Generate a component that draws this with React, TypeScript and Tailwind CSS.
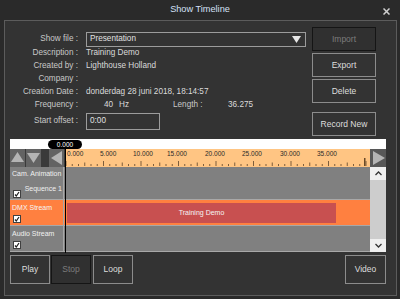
import React from 'react';

const ticks = Array.from({ length: 49 }, (_, i) => i);
// label left edges as seen on the ruler (px from ruler start)
const labels: [number, number][] = [
  [0, 2],
  [5, 35],
  [10, 68],
  [15, 102],
  [20, 140],
  [25, 177],
  [30, 215],
  [35, 252],
];

const Btn = ({ label, disabled, className = '' }: { label: string; disabled?: boolean; className?: string }) => (
  <div
    className={`flex items-center justify-center border text-[8.5px] ${
      disabled ? 'border-[#151515] text-[#7c7c7c] bg-[#303030]' : 'border-[#8c8c8c] text-[#dedede] bg-[#333333]'
    } ${className}`}
  >
    {label}
  </div>
);

const Check = () => (
  <div className="w-[8px] h-[8px] bg-white border border-[#404040] flex items-center justify-center">
    <svg width="6" height="6" viewBox="0 0 6 6">
      <path d="M1 3.5 L2.3 5 L5 1" stroke="#202020" strokeWidth="1.2" fill="none" />
    </svg>
  </div>
);

const Tri = ({ dir }: { dir: 'up' | 'down' | 'left' | 'right' }) => {
  const pts = {
    up: '1,12 7.5,2 14,12',
    down: '1,3 7.5,13 14,3',
    left: '13,1 2,8 13,15',
    right: '2,1 14,8 2,15',
  }[dir];
  return (
    <svg width="15" height="16" viewBox="0 0 15 16">
      <polygon points={pts} fill="#b4b4b4" />
    </svg>
  );
};

const Row = ({ label, children }: { label: string; children?: React.ReactNode }) => (
  <div className="flex items-center h-[13px] leading-[13px]">
    <div className="w-[68px] text-right text-[#c8c8c8] whitespace-nowrap">{label}</div>
    <div className="ml-[8px] flex items-center text-[#dadada] whitespace-nowrap">{children}</div>
  </div>
);

export default function App() {
  return (
    <div className="w-[400px] h-[299px] bg-[#2a2a2a] flex flex-col overflow-hidden font-['Liberation_Sans',Arial,sans-serif] text-[8.2px]">
      <div className="h-[20px] flex items-center justify-center relative text-[9.2px] text-[#d4e1f6]">
        Show Timeline
        <svg className="absolute right-[10px] top-[8px]" width="7" height="7" viewBox="0 0 7 7">
          <path d="M0.5 0.5 L6.5 6.5 M6.5 0.5 L0.5 6.5" stroke="#d0d0d0" strokeWidth="1.5" />
        </svg>
      </div>
      <div className="ml-[4px] w-[393px] h-[276px] border border-[#5c5c5c] bg-[#333333] pl-[5px]">
        <div className="flex items-start">
          <div className="w-[296px] pt-[11px]">
            <div className="flex items-center h-[15px]">
              <div className="w-[68px] text-right text-[#c8c8c8]">Show file :</div>
              <div className="ml-[8px] w-[220px] h-[15px] border border-[#9c9c9c] flex items-center pl-[3px] pr-[4px] text-[#e0e0e0]">
                <span className="flex-1">Presentation</span>
                <svg width="9" height="7" viewBox="0 0 9 7">
                  <polygon points="0,0 9,0 4.5,7" fill="#e6e6e6" />
                </svg>
              </div>
            </div>
            <div className="mt-[-1px]">
              <Row label="Description :">Training Demo</Row>
              <Row label="Created by :">Lighthouse Holland</Row>
              <Row label="Company :" />
              <Row label="Creation Date :">donderdag 28 juni 2018, 18:14:57</Row>
              <Row label="Frequency :">
                <span className="w-[27px] text-right">40</span>
                <span className="ml-[6px] w-[54px]">Hz</span>
                <span className="w-[55px] text-[#c8c8c8]">Length :</span>
                <span>36.275</span>
              </Row>
            </div>
            <div className="flex items-center mt-[2px]">
              <div className="w-[68px] text-right text-[#c8c8c8]">Start offset :</div>
              <div className="ml-[8px] w-[74px] h-[17px] border border-[#9c9c9c] flex items-center pl-[3px] text-[#e0e0e0]">
                0:00
              </div>
            </div>
          </div>
          <div className="ml-[6px] pt-[6px] flex flex-col w-[64px]">
            <Btn label="Import" disabled className="h-[24px]" />
            <Btn label="Export" className="h-[24px] mt-[2px]" />
            <Btn label="Delete" className="h-[24px] mt-[2px]" />
            <Btn label="Record New" className="h-[24px] mt-[9px]" />
          </div>
        </div>

        <div className="mt-[3px] w-[376px] relative">
          <div className="h-[10px] bg-white relative">
            <div className="absolute left-[38px] top-[1px] w-[34px] h-[9px] rounded-full bg-black text-white text-[6.5px] leading-[9px] text-center">
              0.000
            </div>
          </div>
          <div className="h-[18px] flex">
            <div className="w-[55px] flex bg-[#3a3a3a]">
              <div className="w-[15px] bg-[#636363] flex items-center justify-center"><Tri dir="up" /></div>
              <div className="w-[15px] ml-[1px] bg-[#636363] flex items-center justify-center"><Tri dir="down" /></div>
              <div className="w-[15px] ml-[8px] bg-[#636363] flex items-center justify-center"><Tri dir="left" /></div>
            </div>
            <svg width="305" height="18" viewBox="0 0 305 18" className="bg-[#ffc583]">
              {ticks.map((i) => {
                const x = i * 6.25 + 0.5;
                const h = i % 6 === 0 ? 5 : i % 3 === 0 ? 3.5 : 2;
                return <rect key={i} x={x} y={17 - h} width="1" height={h} fill="#7e5e3c" />;
              })}
              <rect x="299" y="9" width="1.5" height="8" fill="#6a4a28" />
              {labels.map(([v, x]) => (
                <text
                  key={v}
                  x={x}
                  y="7"
                  fontSize="6.5"
                  fill="#2a2a2a"
                  fontFamily="Liberation Sans, Arial, sans-serif"
                >
                  {v.toFixed(3)}
                </text>
              ))}
            </svg>
            <div className="w-[16px] bg-[#575757] flex items-center justify-center"><Tri dir="right" /></div>
          </div>
          <div className="flex">
            <div className="w-[360px] flex flex-col">
              <div className="h-[33px] flex border-b border-[#a8a8a8]">
                <div className="w-[54px] bg-[#808080] border-r border-[#a8a8a8] flex flex-col pl-[2px] pt-[2px] text-[7px] text-[#f0f0f0]">
                  <div className="leading-[9px] whitespace-nowrap">Cam. Animation</div>
                  <div className="flex items-start mt-[6px] pl-[1px] h-[14px]">
                    <div className="mt-[6px]"><Check /></div>
                    <div className="ml-auto pr-[1px] leading-[9px]">Sequence 1</div>
                  </div>
                </div>
                <div className="flex-1 bg-[#808080]" />
              </div>
              <div className="h-[26px] flex border-b border-[#a8a8a8]">
                <div className="w-[54px] bg-[#ff8040] border-r border-[#a8a8a8] flex flex-col pl-[2px] pt-[3px] text-[7px] text-[#f6f6f6]">
                  <div className="leading-[9px] whitespace-nowrap">DMX Stream</div>
                  <div className="mt-[3px] pl-[1px]"><Check /></div>
                </div>
                <div className="flex-1 bg-[#ff8040] relative">
                  <div className="absolute left-[3px] top-[3px] w-[269px] h-[20px] bg-[#c85050] flex items-center justify-center text-[7px] text-[#f4f4f4]">
                    Training Demo
                  </div>
                </div>
              </div>
              <div className="h-[26px] flex border-b border-[#a8a8a8]">
                <div className="w-[54px] bg-[#808080] border-r border-[#a8a8a8] flex flex-col pl-[2px] pt-[3px] text-[7px] text-[#f0f0f0]">
                  <div className="leading-[9px] whitespace-nowrap">Audio Stream</div>
                  <div className="mt-[3px] pl-[1px]"><Check /></div>
                </div>
                <div className="flex-1 bg-[#808080]" />
              </div>
            </div>
            <div className="w-[16px] bg-[#cdcdcd] flex flex-col justify-between">
              <div className="h-[13px] bg-[#efefef] flex items-center justify-center">
                <svg width="7" height="5" viewBox="0 0 7 5">
                  <path d="M0.5 4 L3.5 1 L6.5 4" stroke="#333" strokeWidth="1.3" fill="none" />
                </svg>
              </div>
              <div className="h-[13px] bg-[#efefef] flex items-center justify-center">
                <svg width="7" height="5" viewBox="0 0 7 5">
                  <path d="M0.5 1 L3.5 4 L6.5 1" stroke="#333" strokeWidth="1.3" fill="none" />
                </svg>
              </div>
            </div>
          </div>
          <div className="absolute left-[55px] top-[9px] w-px h-[105px] bg-black" />
          <div className="flex mt-[3px]">
            <Btn label="Play" className="w-[40px] h-[29px]" />
            <Btn label="Stop" disabled className="w-[40px] h-[29px] ml-[1px]" />
            <Btn label="Loop" className="w-[40px] h-[29px] ml-[2px]" />
            <Btn label="Video" className="w-[41px] h-[29px] ml-auto" />
          </div>
        </div>
      </div>
    </div>
  );
}
